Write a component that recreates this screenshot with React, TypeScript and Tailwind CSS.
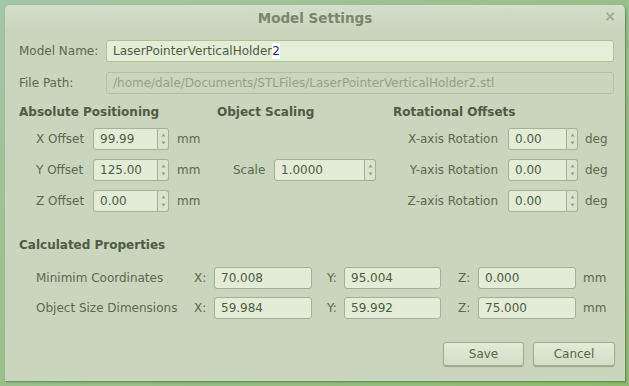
import React from 'react';

const font = { fontFamily: '"DejaVu Sans", "Noto Sans", sans-serif' };

function Spin({ value, width }: { value: string; width: string }) {
  return (
    <div className="flex items-stretch h-[22px]">
      <div className={`${width} h-full flex items-center px-[6px] bg-[#e2ecd6] border border-[#a3b196] rounded-l-[3px] text-[#4d5c3f]`}>
        {value}
      </div>
      <div className="w-[11px] h-full flex flex-col items-center justify-between py-[4px] bg-[#d9e4cd] border border-l-0 border-[#a3b196] rounded-r-[3px]">
        <svg width="5" height="4" viewBox="0 0 5 4"><path d="M0.5 3.5 L2.5 0.5 L4.5 3.5Z" fill="#95a389" /></svg>
        <svg width="5" height="4" viewBox="0 0 5 4"><path d="M0.5 0.5 L2.5 3.5 L4.5 0.5Z" fill="#95a389" /></svg>
      </div>
    </div>
  );
}

function Field({ value, width }: { value: string; width: string }) {
  return (
    <div className={`${width} h-[22px] flex items-center px-[6px] bg-[#e2ecd6] border border-[#a3b196] rounded-[3px] text-[#4d5c3f]`}>
      {value}
    </div>
  );
}

export default function App() {
  return (
    <div className="w-[629px] h-[386px] bg-gradient-to-br from-[#a3c6a6] to-[#8fba70] pt-[5px] pl-[5px] pr-[4px] pb-[5px] text-[12px] leading-[14px] text-[#5a6a4c]" style={font}>
      <div className="w-full h-full bg-[#c9d5bc] rounded-t-[5px] shadow-[1px_1px_2px_rgba(60,80,50,0.6)] flex flex-col">
        <div className="h-[25px] shrink-0 flex items-center justify-center relative bg-gradient-to-b from-[#d4decb] to-[#cad6bd] rounded-t-[5px]">
          <span className="font-bold text-[13.5px] text-[#7a866e]">Model Settings</span>
          <span className="absolute right-[9px] top-[4px] text-[14px] font-bold text-[#a0ac94]">×</span>
        </div>

        <div className="pl-[14px] pr-[11px] pt-[10px] flex flex-col gap-[10px]">
          <div className="flex items-center">
            <span className="w-[87px]">Model Name:</span>
            <div className="flex-1 h-[22px] flex items-center px-[6px] bg-[#e3edd7] border border-[#a7c58c] rounded-[3px] text-[#4d5c3f]">
              LaserPointerVerticalHolder<span className="inline-block bg-white text-[#1a2a50] leading-[16px]">2</span>
            </div>
          </div>
          <div className="flex items-center">
            <span className="w-[87px]">File Path:</span>
            <div className="flex-1 h-[22px] flex items-center px-[6px] bg-[#c9d5bc] border border-[#b3bfa6] rounded-[3px] text-[#95a288]">
              /home/dale/Documents/STLFiles/LaserPointerVerticalHolder2.stl
            </div>
          </div>
        </div>

        <div className="flex pl-[14px] pt-[10px]">
          <div className="w-[198px] flex flex-col">
            <span className="font-bold text-[#4f5b44] h-[16px] leading-[16px]">Absolute Positioning</span>
            <div className="flex flex-col gap-[9px] pt-[8px] pl-[17px]">
              {[['X Offset', '99.99'], ['Y Offset', '125.00'], ['Z Offset', '0.00']].map(([l, v]) => (
                <div key={l} className="flex items-center">
                  <span className="w-[57px]">{l}</span>
                  <Spin value={v} width="w-[65px]" />
                  <span className="ml-[8px]">mm</span>
                </div>
              ))}
            </div>
          </div>
          <div className="w-[176px] flex flex-col">
            <span className="font-bold text-[#4f5b44] h-[16px] leading-[16px]">Object Scaling</span>
            <div className="flex items-center pt-[39px] pl-[16px]">
              <span className="w-[41px]">Scale</span>
              <Spin value="1.0000" width="w-[91px]" />
            </div>
          </div>
          <div className="flex flex-col">
            <span className="font-bold text-[#4f5b44] h-[16px] leading-[16px]">Rotational Offsets</span>
            <div className="flex flex-col gap-[9px] pt-[8px]">
              {['X', 'Y', 'Z'].map((a) => (
                <div key={a} className="flex items-center">
                  <span className="w-[115px] text-right pr-[10px] whitespace-nowrap">{a}-axis Rotation</span>
                  <Spin value="0.00" width="w-[59px]" />
                  <span className="ml-[7px]">deg</span>
                </div>
              ))}
            </div>
          </div>
        </div>

        <div className="pl-[14px] pt-[25px] flex flex-col">
          <span className="font-bold text-[#4f5b44] h-[16px] leading-[16px]">Calculated Properties</span>
          <div className="flex flex-col gap-[8px] pt-[14px] pl-[17px]">
            {[
              ['Minimim Coordinates', '70.008', '95.004', '0.000'],
              ['Object Size Dimensions', '59.984', '59.992', '75.000'],
            ].map(([l, x, y, z]) => (
              <div key={l} className="flex items-center">
                <span className="w-[158px] whitespace-nowrap">{l}</span>
                <span className="w-[20px]">X:</span>
                <Field value={x} width="w-[98px]" />
                <span className="w-[32px] pl-[15px]">Y:</span>
                <Field value={y} width="w-[97px]" />
                <span className="w-[37px] pl-[17px]">Z:</span>
                <Field value={z} width="w-[98px]" />
                <span className="ml-[7px]">mm</span>
              </div>
            ))}
          </div>
        </div>

        <div className="flex justify-end gap-[9px] pr-[10px] pt-[23px]">
          {['Save', 'Cancel'].map((b) => (
            <button key={b} className={`${b === 'Save' ? 'w-[81px]' : 'w-[82px]'} h-[24px] flex items-center justify-center bg-gradient-to-b from-[#e2ebd7] to-[#d2ddc5] border border-[#9fad92] rounded-[3px] text-[#566649] shadow-[0_1px_1px_rgba(60,80,50,0.35)]`}>
              {b}
            </button>
          ))}
        </div>
      </div>
    </div>
  );
}
